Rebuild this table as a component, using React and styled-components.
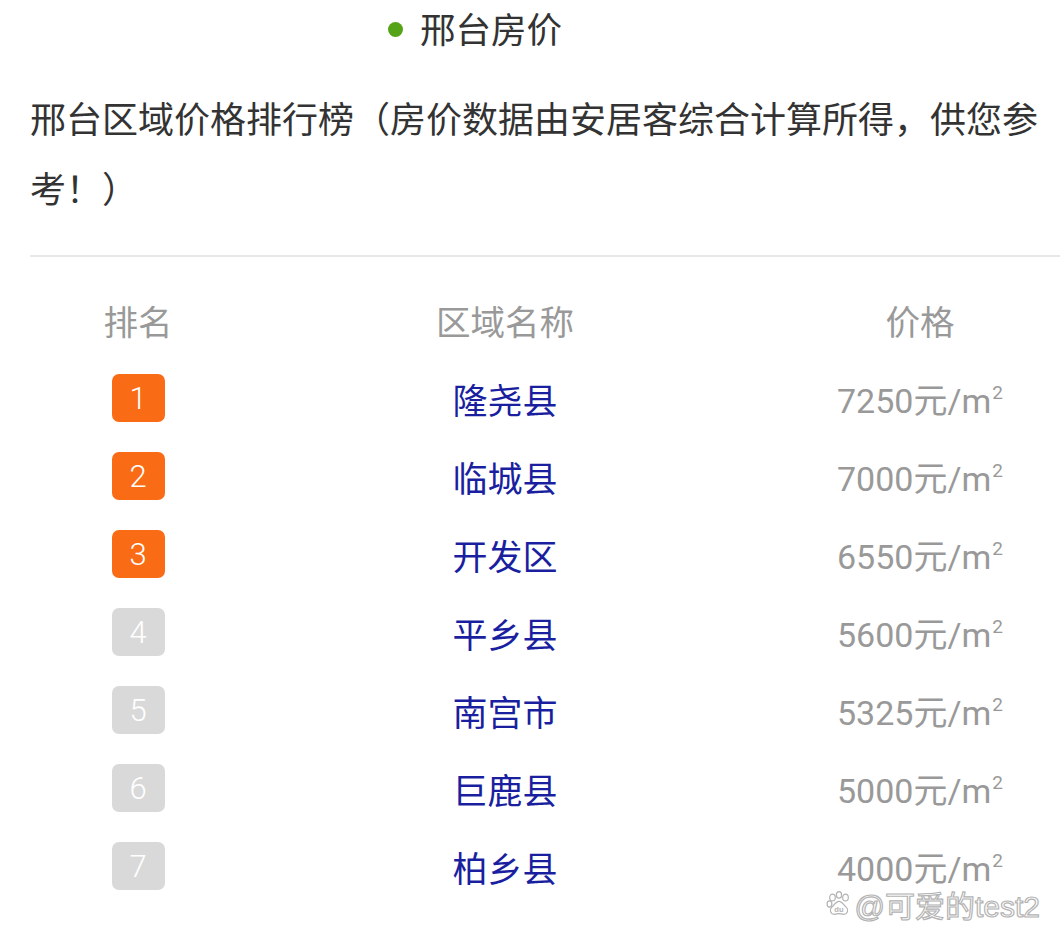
import React from "react";
import styled, { createGlobalStyle } from "styled-components";

const Global = createGlobalStyle`
  html, body { margin: 0; padding: 0; background: #ffffff; }
  body { font-family: "Noto Sans CJK SC", "Noto Sans", sans-serif; }
  #root { width: 1060px; min-height: 946px; }
`;

const Page = styled.div`
  position: relative;
  width: 1060px;
  height: 946px;
  overflow: hidden;
  background: #fff;
`;

const Title = styled.div`
  display: flex;
  align-items: center;
  gap: 17px;
  height: 54px;
  padding: 0 0 6px 388px;
  font-size: 35.5px;
  color: #333;
`;

const Dot = styled.span`
  width: 15px;
  height: 15px;
  border-radius: 50%;
  background: #57a318;
  margin-top: 4px;
`;

const Intro = styled.p`
  margin: 22px 0 0;
  padding: 0 20px 0 30px;
  font-size: 36px;
  line-height: 70px;
  color: #333;
`;

const Divider = styled.hr`
  margin: 33px 0 0 30px;
  border: 0;
  height: 2px;
  background: #e8e8e8;
`;

const Table = styled.div`
  margin-top: 24px;
  display: grid;
  grid-template-columns: 216px 518px 1fr;
  grid-auto-rows: 78px;
  padding-left: 30px;
`;

const Cell = styled.div`
  display: flex;
  align-items: center;
  justify-content: center;
  padding-left: ${(p) => (p.$last ? "16px" : "0")};
`;

const Head = styled(Cell)`
  font-size: 34.5px;
  color: #999;
`;

const Badge = styled.span`
  width: 53px;
  height: 48px;
  border-radius: 7px;
  background: ${(p) => (p.$top ? "#f96b14" : "#d9d9d9")};
  color: #fff;
  font-size: 31px;
  display: flex;
  align-items: center;
  justify-content: center;
  font-family: Roboto, "Noto Sans", sans-serif;
  font-weight: 300;
`;

const Name = styled.span`
  font-size: 35px;
  color: #1a1f9f;
`;

const Price = styled.span`
  font-family: Roboto, "Noto Sans CJK SC", sans-serif;
  font-size: 34px;
  color: #999;
  sup {
    font-size: 19px;
    vertical-align: 0;
    position: relative;
    top: -14px;
    margin-left: 1px;
  }
`;

const Watermark = styled.div`
  position: absolute;
  right: 20px;
  bottom: 20px;
  display: flex;
  align-items: center;
  gap: 3px;
  font-family: "Liberation Sans", "Noto Sans CJK SC", sans-serif;
  font-size: 30px;
  color: #fff;
  -webkit-text-stroke: 1.2px #b3b3b3;
`;

const rows = [
  ["1", "隆尧县", "7250"],
  ["2", "临城县", "7000"],
  ["3", "开发区", "6550"],
  ["4", "平乡县", "5600"],
  ["5", "南宫市", "5325"],
  ["6", "巨鹿县", "5000"],
  ["7", "柏乡县", "4000"],
];

const Paw = () => (
  <svg width="26" height="26" viewBox="0 0 24 24">
    <g fill="#fff" stroke="#b3b3b3" strokeWidth="1.1">
      <ellipse cx="6" cy="6" rx="2.6" ry="3.2" />
      <ellipse cx="12" cy="3.6" rx="2.4" ry="3" />
      <ellipse cx="18" cy="6" rx="2.6" ry="3.2" />
      <ellipse cx="3.2" cy="12" rx="2.2" ry="2.8" />
      <path d="M12 9.5c-3 0-4.5 3.5-7 5.8-2 1.8-1 6.2 2.6 6.2 2 0 2.8-.7 4.4-.7s2.4.7 4.4.7c3.6 0 4.6-4.4 2.6-6.2-2.5-2.3-4-5.8-7-5.8z" />
    </g>
    <text x="12" y="19.5" fontSize="7" textAnchor="middle" fill="#b3b3b3" fontFamily="Liberation Sans, sans-serif" fontWeight="700">du</text>
  </svg>
);

export default function App() {
  return (
    <Page>
      <Global />
      <Title>
        <Dot />
        <span>邢台房价</span>
      </Title>
      <Intro>邢台区域价格排行榜（房价数据由安居客综合计算所得，供您参考！）</Intro>
      <Divider />
      <Table>
        <Head>排名</Head>
        <Head>区域名称</Head>
        <Head $last>价格</Head>
        {rows.map(([rank, name, price]) => (
          <React.Fragment key={rank}>
            <Cell>
              <Badge $top={Number(rank) <= 3}>{rank}</Badge>
            </Cell>
            <Cell>
              <Name>{name}</Name>
            </Cell>
            <Cell $last>
              <Price>
                {price}元/m<sup>2</sup>
              </Price>
            </Cell>
          </React.Fragment>
        ))}
      </Table>
      <Watermark>
        <Paw />
        <span>@可爱的test2</span>
      </Watermark>
    </Page>
  );
}
